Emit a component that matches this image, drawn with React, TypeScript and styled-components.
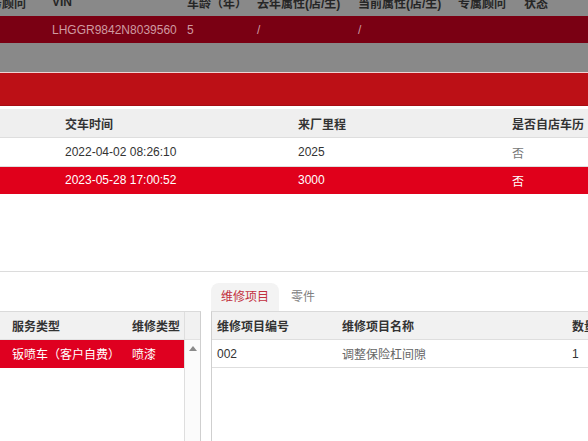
import styled, { createGlobalStyle } from 'styled-components';

const GlobalStyle = createGlobalStyle`
  html, body {
    margin: 0;
    padding: 0;
    background: #fff;
    overflow: hidden;
  }
  body {
    font-family: "Liberation Sans", "Noto Sans CJK SC", sans-serif;
    font-size: 12px;
    color: #333;
  }
`;

const Page = styled.div`
  width: 588px;
  height: 441px;
  overflow: hidden;
  display: flex;
  flex-direction: column;
`;

/* dimmed page behind the dialog */
const Backdrop = styled.div`
  height: 72px;
  flex-shrink: 0;
  background: #898989;
  overflow: hidden;
`;

const BackGrid = styled.div`
  margin: -12px 0 0 -22px;
`;

const BackRow = styled.div<{ $head?: boolean; $active?: boolean }>`
  display: grid;
  grid-template-columns: 74px 135px 70px 101px 100px 66px 1fr;
  height: ${(p) => (p.$head ? '28px' : '27px')};
  align-items: center;
  white-space: nowrap;
  background: ${(p) => (p.$active ? '#7a0013' : 'transparent')};
  color: ${(p) => (p.$head ? '#262626' : p.$active ? '#cf9aa1' : '#333')};
  font-weight: ${(p) => (p.$head ? 'bold' : 'normal')};
`;

const Modal = styled.div`
  flex: 1;
  display: flex;
  flex-direction: column;
  border-top: 1px solid #f0d2d2;
  background: #fff;
`;

const TitleBar = styled.div`
  height: 32px;
  background: #bc1016;
  border-bottom: 1px solid #a70d13;
`;

const Body = styled.div`
  padding-top: 3px;
  display: flex;
  flex-direction: column;
`;

const HistRow = styled.div<{ $head?: boolean; $active?: boolean }>`
  display: grid;
  grid-template-columns: 57px 233px 214px 1fr;
  height: 28px;
  align-items: center;
  white-space: nowrap;
  border-bottom: 1px solid ${(p) => (p.$active ? 'transparent' : '#dedede')};
  background: ${(p) => (p.$head ? '#efefef' : p.$active ? '#e0001b' : '#fff')};
  color: ${(p) => (p.$active ? '#fff' : '#333')};
  font-weight: ${(p) => (p.$head ? 'bold' : 'normal')};
  &:last-child {
    height: 26px;
  }
`;

const Cell = styled.div<{ $muted?: boolean }>`
  padding-left: 8px;
  color: ${(p) => (p.$muted ? '#777' : 'inherit')};
`;

const Divider = styled.div`
  margin-top: 77px;
  height: 1px;
  background: #dcdcdc;
`;

const Lower = styled.div`
  display: grid;
  grid-template-columns: 201px 1fr;
  grid-template-rows: 39px 1fr;
  column-gap: 10px;
  height: 170px;
`;

const Tabs = styled.div`
  grid-column: 2;
  grid-row: 1;
  display: flex;
  align-items: flex-end;
  gap: 2px;
`;

const Tab = styled.div<{ $active?: boolean }>`
  height: 28px;
  line-height: 28px;
  padding: 0 10px;
  border-radius: 8px 8px 0 0;
  background: ${(p) => (p.$active ? '#f3f3f3' : 'transparent')};
  color: ${(p) => (p.$active ? '#c2303e' : '#808080')};
`;

const LeftPane = styled.div`
  grid-column: 1;
  grid-row: 2;
  display: flex;
  border-top: 1px solid #dadada;
  border-right: 1px solid #cfcfcf;
`;

const LeftMain = styled.div`
  width: 185px;
  border-right: 1px solid #dedede;
`;

const ServiceRow = styled.div<{ $head?: boolean; $active?: boolean }>`
  display: grid;
  grid-template-columns: 120px 1fr;
  height: 27px;
  align-items: center;
  white-space: nowrap;
  background: ${(p) => (p.$head ? '#f1f1f1' : p.$active ? '#df0020' : '#fff')};
  color: ${(p) => (p.$active ? '#fff' : '#333')};
  font-weight: ${(p) => (p.$head ? 'bold' : 'normal')};
  border-bottom: 1px solid ${(p) => (p.$head ? '#e2e2e2' : 'transparent')};
  & > div {
    padding-left: 12px;
  }
`;

const ScrollBar = styled.div`
  width: 15px;
  display: flex;
  flex-direction: column;
`;

const ScrollCap = styled.div`
  height: 27px;
  background: #f1f1f1;
  border-bottom: 1px solid #e2e2e2;
`;

const ScrollTrack = styled.div`
  flex: 1;
  background: #fbfbfb;
  display: flex;
  justify-content: center;
  padding-top: 6px;
`;

const UpArrow = styled.div`
  width: 0;
  height: 0;
  border-left: 4px solid transparent;
  border-right: 4px solid transparent;
  border-bottom: 5px solid #8a8a8a;
`;

const RightPane = styled.div`
  grid-column: 2;
  grid-row: 2;
  border-top: 1px solid #dadada;
  border-left: 1px solid #cfcfcf;
`;

const ItemRow = styled.div<{ $head?: boolean }>`
  display: grid;
  grid-template-columns: 125px 230px 1fr;
  height: 27px;
  align-items: center;
  white-space: nowrap;
  background: ${(p) => (p.$head ? '#f1f1f1' : '#fff')};
  font-weight: ${(p) => (p.$head ? 'bold' : 'normal')};
  border-bottom: 1px solid #dedede;
  & > div {
    padding-left: 5px;
  }
`;

const Muted = styled.div`
  color: #666;
`;

const backHead = ['服务顾问', 'VIN', '车龄（年）', '去年属性(店/生)', '当前属性(店/生)', '专属顾问', '状态'];
const backRow = ['', 'LHGGR9842N8039560', '5', '/', '/', '', ''];

const history = [
  { time: '2022-04-02 08:26:10', mileage: '2025', own: '否' },
  { time: '2023-05-28 17:00:52', mileage: '3000', own: '否' },
];

export default function App() {
  return (
    <>
      <GlobalStyle />
      <Page>
        <Backdrop>
          <BackGrid>
            <BackRow $head>
              {backHead.map((h) => (
                <div key={h}>{h}</div>
              ))}
            </BackRow>
            <BackRow $active>
              {backRow.map((v, i) => (
                <div key={i}>{v}</div>
              ))}
            </BackRow>
          </BackGrid>
        </Backdrop>

        <Modal>
          <TitleBar />
          <Body>
            <HistRow $head>
              <Cell />
              <Cell>交车时间</Cell>
              <Cell>来厂里程</Cell>
              <Cell>是否自店车历</Cell>
            </HistRow>
            {history.map((r, i) => (
              <HistRow key={r.time} $active={i === history.length - 1}>
                <Cell />
                <Cell>{r.time}</Cell>
                <Cell>{r.mileage}</Cell>
                <Cell $muted={i !== history.length - 1}>{r.own}</Cell>
              </HistRow>
            ))}
          </Body>

          <Divider />

          <Lower>
            <Tabs>
              <Tab $active>维修项目</Tab>
              <Tab>零件</Tab>
            </Tabs>

            <LeftPane>
              <LeftMain>
                <ServiceRow $head>
                  <div>服务类型</div>
                  <div>维修类型</div>
                </ServiceRow>
                <ServiceRow $active>
                  <div>钣喷车（客户自费）</div>
                  <div>喷漆</div>
                </ServiceRow>
              </LeftMain>
              <ScrollBar>
                <ScrollCap />
                <ScrollTrack>
                  <UpArrow />
                </ScrollTrack>
              </ScrollBar>
            </LeftPane>

            <RightPane>
              <ItemRow $head>
                <div>维修项目编号</div>
                <div>维修项目名称</div>
                <div>数量</div>
              </ItemRow>
              <ItemRow>
                <div>002</div>
                <Muted>调整保险杠间隙</Muted>
                <div>1</div>
              </ItemRow>
            </RightPane>
          </Lower>
        </Modal>
      </Page>
    </>
  );
}
